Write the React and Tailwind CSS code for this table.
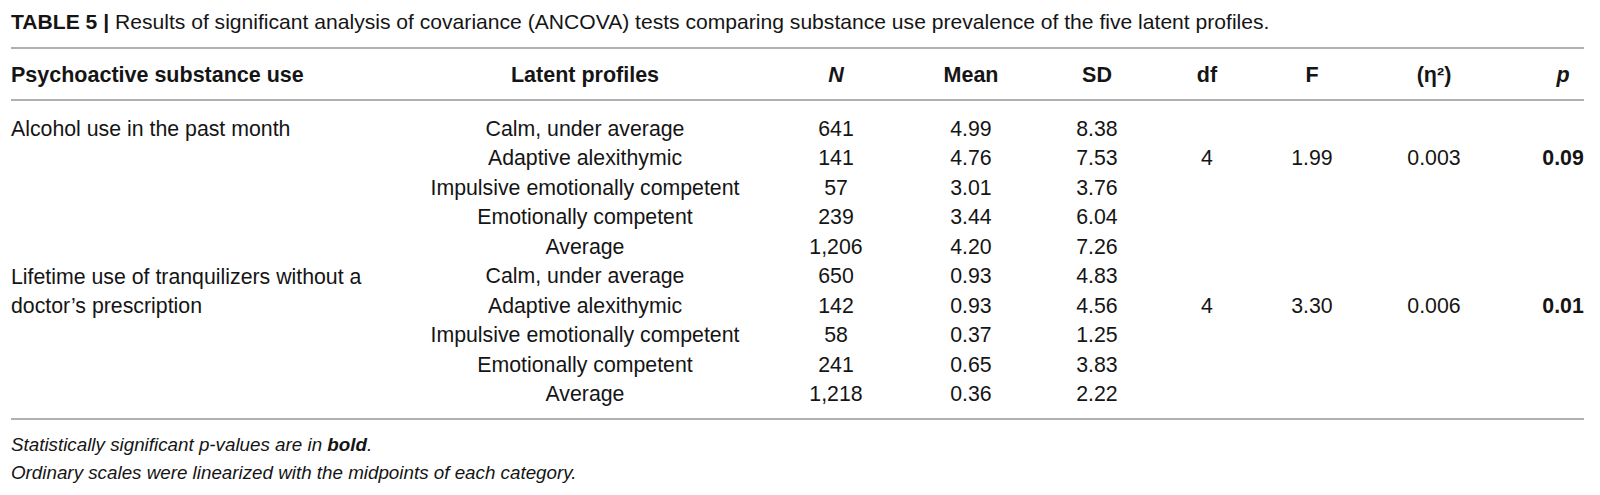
import React from "react";

const groups = [
  {
    label: "Alcohol use in the past month",
    rows: [
      ["Calm, under average", "641", "4.99", "8.38"],
      ["Adaptive alexithymic", "141", "4.76", "7.53"],
      ["Impulsive emotionally competent", "57", "3.01", "3.76"],
      ["Emotionally competent", "239", "3.44", "6.04"],
      ["Average", "1,206", "4.20", "7.26"],
    ],
    stats: ["4", "1.99", "0.003", "0.09"],
  },
  {
    label: "Lifetime use of tranquilizers without a doctor\u2019s prescription",
    rows: [
      ["Calm, under average", "650", "0.93", "4.83"],
      ["Adaptive alexithymic", "142", "0.93", "4.56"],
      ["Impulsive emotionally competent", "58", "0.37", "1.25"],
      ["Emotionally competent", "241", "0.65", "3.83"],
      ["Average", "1,218", "0.36", "2.22"],
    ],
    stats: ["4", "3.30", "0.006", "0.01"],
  },
];

function Cell({ children, className = "" }) {
  return (
    <div className={"flex justify-center whitespace-nowrap " + className}>
      {children}
    </div>
  );
}

function Col({ items, className = "" }) {
  return (
    <div className={"flex flex-col " + className}>
      {items.map((t, i) => (
        <div key={i} className="flex h-[29.5px] items-center justify-center whitespace-nowrap">
          {t}
        </div>
      ))}
    </div>
  );
}

export default function App() {
  return (
    <div
      className="h-[495px] w-[1600px] overflow-hidden bg-white pl-[11px] text-[#151515]"
      style={{ fontFamily: '"Liberation Sans", Arial, sans-serif' }}
    >
      <div className="pt-[10px] text-[21.1px] leading-[24px] whitespace-nowrap">
        <span className="font-bold">TABLE 5 | </span>
        <span>
          Results of significant analysis of covariance (ANCOVA) tests comparing substance use
          prevalence of the five latent profiles.
        </span>
      </div>
      <div className="mt-[13px] h-[2px] w-[1573px] bg-[#b0b0b0]" />

      <div className="flex h-[50px] items-center pt-[2px] text-[21.5px] font-bold">
        <div className="w-[419px]">Psychoactive substance use</div>
        <Cell className="w-[310px]">Latent profiles</Cell>
        <Cell className="ml-[66px] w-[60px] italic">N</Cell>
        <Cell className="ml-[75px] w-[60px]">Mean</Cell>
        <Cell className="ml-[66px] w-[60px]">SD</Cell>
        <Cell className="ml-[50px] w-[60px]">df</Cell>
        <Cell className="ml-[45px] w-[60px]">F</Cell>
        <Cell className="ml-[62px] w-[60px]">(η²)</Cell>
        <Cell className="ml-[79px] w-[40px] italic">p</Cell>
      </div>
      <div className="h-[2px] w-[1573px] bg-[#b0b0b0]" />

      <div className="pt-[14px] text-[21.3px]">
        {groups.map((g, gi) => (
          <div key={gi} className="flex">
            <div className="w-[419px]">
              <div className="w-[380px] leading-[29.5px]">{g.label}</div>
            </div>
            <Col className="w-[310px]" items={g.rows.map((r) => r[0])} />
            <Col className="ml-[66px] w-[60px]" items={g.rows.map((r) => r[1])} />
            <Col className="ml-[75px] w-[60px]" items={g.rows.map((r) => r[2])} />
            <Col className="ml-[66px] w-[60px]" items={g.rows.map((r) => r[3])} />
            <Col className="ml-[50px] w-[60px]" items={["", g.stats[0]]} />
            <Col className="ml-[45px] w-[60px]" items={["", g.stats[1]]} />
            <Col className="ml-[62px] w-[60px]" items={["", g.stats[2]]} />
            <Col className="ml-[79px] w-[40px] font-bold" items={["", g.stats[3]]} />
          </div>
        ))}
      </div>

      <div className="mt-[8px] h-[2px] w-[1573px] bg-[#b0b0b0]" />
      <div className="mt-[11px] text-[18.8px] leading-[28px] italic">
        <div>
          Statistically significant p-values are in <span className="font-bold">bold</span>.
        </div>
        <div>Ordinary scales were linearized with the midpoints of each category.</div>
      </div>
    </div>
  );
}
